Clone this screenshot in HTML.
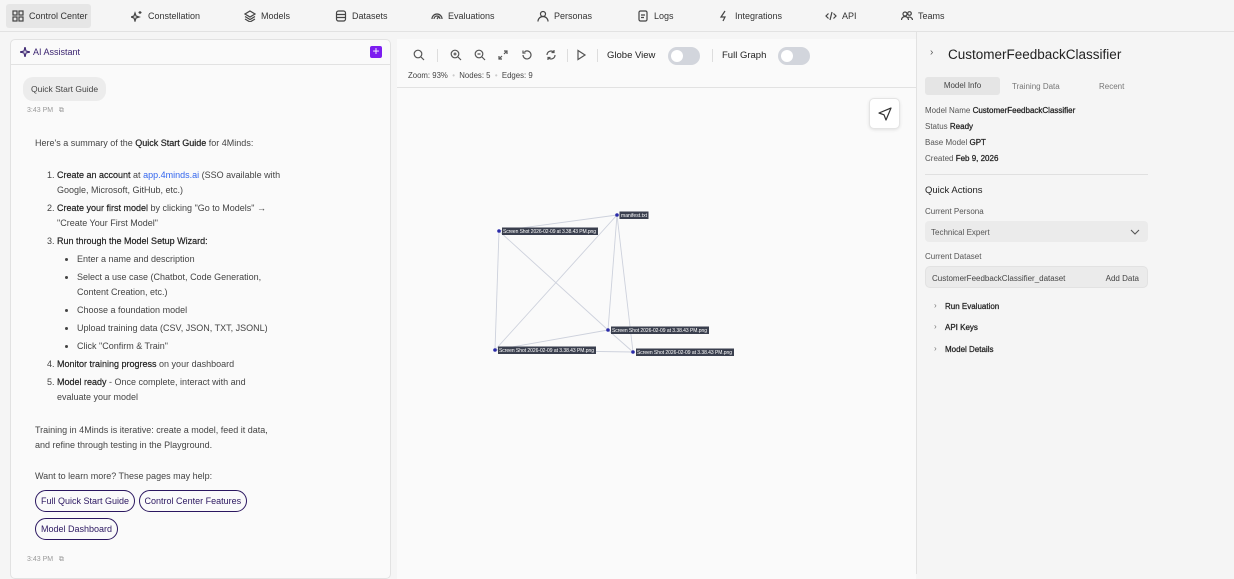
<!DOCTYPE html>
<html><head><meta charset="utf-8"><style>
*{box-sizing:border-box;margin:0;padding:0}
body{width:1234px;height:574px;overflow:hidden;background:#f5f5f5;font-family:"Liberation Sans",sans-serif;color:#222;position:relative}
.top{position:absolute;left:0;top:0;width:1234px;height:32px;border-bottom:1px solid #e2e2e2;background:#f5f5f5}
.nav{position:absolute;top:4px;height:24px;display:flex;align-items:center;font-size:9px;color:#333;gap:5px}
.nav svg{width:12px;height:12px;fill:none;stroke:#444;stroke-width:1.2}
.left{position:absolute;left:10px;top:39px;width:381px;height:540px;background:#fafafa;border:1px solid #e2e2e2;border-radius:5px}
.lh{height:25px;border-bottom:1px solid #e2e2e2;display:flex;align-items:center;padding-left:9px;font-size:9px;color:#3b2470}
.plus{position:absolute;right:8px;top:6px;width:12px;height:12px;background:#7c1df0;border-radius:2px;color:#fff;font-size:12px;line-height:11px;text-align:center}
.chip{position:absolute;left:12px;top:37px;background:#ececec;border-radius:10px;padding:7px 8px;font-size:8.5px;color:#444}
.ts{position:absolute;left:16px;font-size:7px;color:#999}
.msg{position:absolute;left:24px;top:96px;font-size:9px;color:#444;line-height:15px;width:262px}
.msg b{color:#222;font-weight:normal;-webkit-text-stroke:.2px #222}
ol{padding-left:22px} ol>li{margin-bottom:3px}
ul{padding-left:20px;list-style:disc;margin-top:3px}
ul li{margin-bottom:3px;padding-left:0}
.pill{display:inline-block;border:1.3px solid #2b1760;border-radius:12px;padding:4px 5px;color:#2b1760;font-size:9px;line-height:12px;margin-right:1px}
.mid{position:absolute;left:397px;top:39px;width:519px;height:540px;background:#fafafa}
.tb{height:49px;border-bottom:1px solid #e2e2e2;position:relative}
.ic{position:absolute;top:10px;width:12px;height:12px;fill:none;stroke:#555;stroke-width:1.2}
.sep{position:absolute;top:10px;width:1px;height:13px;background:#ddd}
.tog{position:absolute;top:8px;width:32px;height:18px;background:#d2d5dc;border-radius:9px}
.tog:after{content:"";position:absolute;left:3px;top:3px;width:12px;height:12px;border-radius:50%;background:#fff}
.right{position:absolute;left:916px;top:32px;width:318px;height:542px;border-left:1px solid #e2e2e2;background:#f5f5f5;font-size:8px;color:#555}
.r{position:absolute;left:8px}
.r b{color:#222;font-weight:normal;-webkit-text-stroke:.25px #222}
</style></head><body>
<div class="top">
 <div class="nav" style="left:6px;width:85px;background:#e6e6e6;border-radius:3px;padding-left:6px"><svg viewBox="0 0 12 12"><rect x="1" y="1" width="4" height="4"/><rect x="7" y="1" width="4" height="4"/><rect x="1" y="7" width="4" height="4"/><rect x="7" y="7" width="4" height="4"/></svg>Control Center</div>
 <div class="nav" style="left:131px"><svg viewBox="0 0 12 12"><path d="M4 3L5 6 8 7 5 8 4 11 3 8 0 7 3 6Z M9 1v3M7.5 2.5h3"/></svg>Constellation</div>
 <div class="nav" style="left:244px"><svg viewBox="0 0 12 12"><path d="M6 1L11 4 6 7 1 4Z M1 6.5L6 9.5 11 6.5M1 9L6 12 11 9"/></svg>Models</div>
 <div class="nav" style="left:335px"><svg viewBox="0 0 12 12"><rect x="1.5" y="1" width="9" height="10" rx="2"/><path d="M1.5 4.5h9M1.5 7.5h9"/></svg>Datasets</div>
 <div class="nav" style="left:431px"><svg viewBox="0 0 12 12"><path d="M1 9A5 5 0 0 1 11 9M3 9a3 3 0 0 1 6 0M6 9l2-3"/></svg>Evaluations</div>
 <div class="nav" style="left:537px"><svg viewBox="0 0 12 12"><circle cx="6" cy="4" r="2.5"/><path d="M1 11.5a5 5 0 0 1 10 0"/></svg>Personas</div>
 <div class="nav" style="left:637px"><svg viewBox="0 0 12 12"><rect x="2" y="1" width="8" height="10" rx="1.5"/><path d="M4 5h4M4 7.5h3"/></svg>Logs</div>
 <div class="nav" style="left:718px"><svg viewBox="0 0 12 12"><path d="M7 1L3 7h4L5 11"/></svg>Integrations</div>
 <div class="nav" style="left:825px"><svg viewBox="0 0 12 12"><path d="M3.5 3.5L1 6l2.5 2.5M8.5 3.5L11 6 8.5 8.5M7 2L5 10"/></svg>API</div>
 <div class="nav" style="left:901px"><svg viewBox="0 0 12 12"><circle cx="4" cy="4" r="2"/><circle cx="8.5" cy="3.5" r="1.8"/><path d="M0.5 10a3.5 3.5 0 0 1 7 0M7 7.5a3 3 0 0 1 4.5 2.5"/></svg>Teams</div>
</div>

<div class="left">
 <div class="lh"><svg width="10" height="10" viewBox="0 0 10 10" style="margin-right:3px"><path d="M5 0L6 4 10 5 6 6 5 10 4 6 0 5 4 4Z" fill="none" stroke="#3b2470" stroke-width="1.1"/></svg>AI Assistant</div>
 <div class="plus">+</div>
 <div class="chip">Quick Start Guide</div>
 <div class="ts" style="top:67px">3:43 PM &nbsp;&nbsp;⧉</div>
 <div class="msg">
  <div>Here's a summary of the <b>Quick Start Guide</b> for 4Minds:</div>
  <div style="height:17px"></div>
  <ol>
   <li><b>Create an account</b> at <span style="color:#3366ee">app.4minds.ai</span> (SSO available with Google, Microsoft, GitHub, etc.)</li>
   <li><b>Create your first model</b> by clicking "Go to Models" →<br>"Create Your First Model"</li>
   <li><b>Run through the Model Setup Wizard:</b>
    <ul><li>Enter a name and description</li><li>Select a use case (Chatbot, Code Generation,<br>Content Creation, etc.)</li><li>Choose a foundation model</li><li>Upload training data (CSV, JSON, TXT, JSONL)</li><li style="margin-bottom:0">Click "Confirm &amp; Train"</li></ul></li>
   <li><b>Monitor training progress</b> on your dashboard</li>
   <li style="margin-bottom:0"><b>Model ready</b> - Once complete, interact with and<br>evaluate your model</li>
  </ol>
  <div style="height:18px"></div>
  <div style="width:260px">Training in 4Minds is iterative: create a model, feed it data,<br>and refine through testing in the Playground.</div>
  <div style="height:16px"></div>
  <div>Want to learn more? These pages may help:</div>
  <div style="margin-top:3px;line-height:28px"><span class="pill">Full Quick Start Guide</span> <span class="pill">Control Center Features</span><br><span class="pill">Model Dashboard</span></div>
 </div>
 <div class="ts" style="top:516px">3:43 PM &nbsp;&nbsp;⧉</div>
</div>

<div class="mid">
 <div class="tb">
  <svg class="ic" style="left:16px" viewBox="0 0 12 12"><circle cx="5" cy="5" r="3.8"/><path d="M8 8l3 3"/></svg>
  <div class="sep" style="left:40px"></div>
  <svg class="ic" style="left:53px" viewBox="0 0 12 12"><circle cx="5" cy="5" r="3.8"/><path d="M8 8l3 3M3.5 5h3M5 3.5v3"/></svg>
  <svg class="ic" style="left:77px" viewBox="0 0 12 12"><circle cx="5" cy="5" r="3.8"/><path d="M8 8l3 3M3.5 5h3"/></svg>
  <svg class="ic" style="left:100px" viewBox="0 0 12 12"><path d="M7 2h3v3M10 2L7 5M5 10H2V7M2 10l3-3"/></svg>
  <svg class="ic" style="left:124px" viewBox="0 0 12 12"><path d="M2 6a4 4 0 1 0 1.5-3.2M2 1.5v2.5h2.5"/></svg>
  <svg class="ic" style="left:148px" viewBox="0 0 12 12"><path d="M2 6a4 4 0 0 1 7-2.6M10 6a4 4 0 0 1-7 2.6M9 1v2.5H6.5M3 11V8.5h2.5"/></svg>
  <div class="sep" style="left:170px"></div>
  <svg class="ic" style="left:178px" viewBox="0 0 12 12"><path d="M3 1.5v9L10 6Z"/></svg>
  <div class="sep" style="left:200px"></div>
  <div style="position:absolute;left:210px;top:11px;font-size:9.5px;color:#222">Globe View</div>
  <div class="tog" style="left:271px"></div>
  <div class="sep" style="left:315px"></div>
  <div style="position:absolute;left:325px;top:11px;font-size:9.5px;color:#222">Full Graph</div>
  <div class="tog" style="left:381px"></div>
  <div style="position:absolute;left:11px;top:32px;font-size:7.8px;color:#444">Zoom: 93% <span style="color:#ccc">&nbsp;•&nbsp;</span> Nodes: 5 <span style="color:#ccc">&nbsp;•&nbsp;</span> Edges: 9</div>
 </div>
 <div style="position:absolute;left:472px;top:59px;width:31px;height:31px;background:#fff;border:1px solid #e4e4e4;border-radius:5px;box-shadow:0 1px 3px rgba(0,0,0,.1)">
  <svg width="14" height="14" viewBox="0 0 14 14" style="position:absolute;left:8px;top:8px"><path d="M13 1L1 6l5 1.8L8 13Z" fill="none" stroke="#333" stroke-width="1.2" stroke-linejoin="round"/></svg>
 </div>
 <svg width="519" height="400" style="position:absolute;left:0;top:49px" font-family="Liberation Sans" font-size="5">
  <g stroke="#cdd1dc" stroke-width="0.9">
   <line x1="102" y1="143" x2="220" y2="127"/><line x1="102" y1="143" x2="98" y2="262"/><line x1="102" y1="143" x2="211" y2="242"/>
   <line x1="220" y1="127" x2="98" y2="262"/><line x1="220" y1="127" x2="211" y2="242"/><line x1="220" y1="127" x2="236" y2="264"/>
   <line x1="98" y1="262" x2="211" y2="242"/><line x1="98" y1="262" x2="236" y2="264"/><line x1="211" y1="242" x2="236" y2="264"/>
  </g>
  <g fill="#2a2aa8"><circle cx="102" cy="143" r="1.8"/><circle cx="220" cy="127" r="1.8"/><circle cx="98" cy="262" r="1.8"/><circle cx="211" cy="242" r="1.8"/><circle cx="236" cy="264" r="1.8"/></g>
  <g fill="#3a3f4e"><rect x="105" y="139.5" width="96" height="7.5"/><rect x="222.5" y="123.5" width="29" height="7.5"/><rect x="101" y="258.5" width="98" height="7.5"/><rect x="214" y="238.5" width="98" height="7.5"/><rect x="239" y="260.5" width="98" height="7.5"/></g>
  <g fill="#fff">
   <text x="106" y="145" textLength="93">Screen Shot 2026-02-09 at 3.38.43 PM.png</text>
   <text x="224" y="129" textLength="26">manifest.txt</text>
   <text x="102" y="264" textLength="95">Screen Shot 2026-02-09 at 3.38.43 PM.png</text>
   <text x="215" y="244" textLength="95">Screen Shot 2026-02-09 at 3.38.43 PM.png</text>
   <text x="240" y="266" textLength="95">Screen Shot 2026-02-09 at 3.38.43 PM.png</text>
  </g>
 </svg>
</div>

<div class="right">
 <div class="r" style="left:13px;top:15px;font-size:10px;color:#555">›</div>
 <div class="r" style="left:31px;top:15px;font-size:13.5px;color:#222">CustomerFeedbackClassifier</div>
 <div class="r" style="top:45px;width:75px;height:18px;background:#e5e5e5;border-radius:3px;text-align:center;line-height:18px;color:#444">Model Info</div>
 <div class="r" style="left:95px;top:50px;color:#777">Training Data</div>
 <div class="r" style="left:182px;top:50px;color:#777">Recent</div>
 <div class="r" style="top:74px">Model Name <b>CustomerFeedbackClassifier</b></div>
 <div class="r" style="top:90px">Status <b>Ready</b></div>
 <div class="r" style="top:106px">Base Model <b>GPT</b></div>
 <div class="r" style="top:122px">Created <b>Feb 9, 2026</b></div>
 <div class="r" style="top:142px;width:223px;height:1px;background:#e0e0e0"></div>
 <div class="r" style="top:153px;font-size:9.5px;color:#222">Quick Actions</div>
 <div class="r" style="top:175px">Current Persona</div>
 <div class="r" style="top:189px;width:223px;height:21px;background:#ebebeb;border-radius:4px;padding:7px 6px">Technical Expert<svg width="10" height="6" style="position:absolute;right:8px;top:8px"><path d="M1 1l4 4 4-4" fill="none" stroke="#555" stroke-width="1.1"/></svg></div>
 <div class="r" style="top:220px">Current Dataset</div>
 <div class="r" style="top:234px;width:223px;height:22px;background:#ebebeb;border:1px solid #e2e2e2;border-radius:5px;padding:7px 6px;color:#444">CustomerFeedbackClassifier_dataset<span style="position:absolute;right:8px">Add Data</span></div>
 <div class="r" style="left:17px;top:269px;color:#777">›</div><div class="r" style="left:28px;top:270px"><b>Run Evaluation</b></div>
 <div class="r" style="left:17px;top:290px;color:#777">›</div><div class="r" style="left:28px;top:291px"><b>API Keys</b></div>
 <div class="r" style="left:17px;top:312px;color:#777">›</div><div class="r" style="left:28px;top:313px"><b>Model Details</b></div>
</div>
</body></html>
